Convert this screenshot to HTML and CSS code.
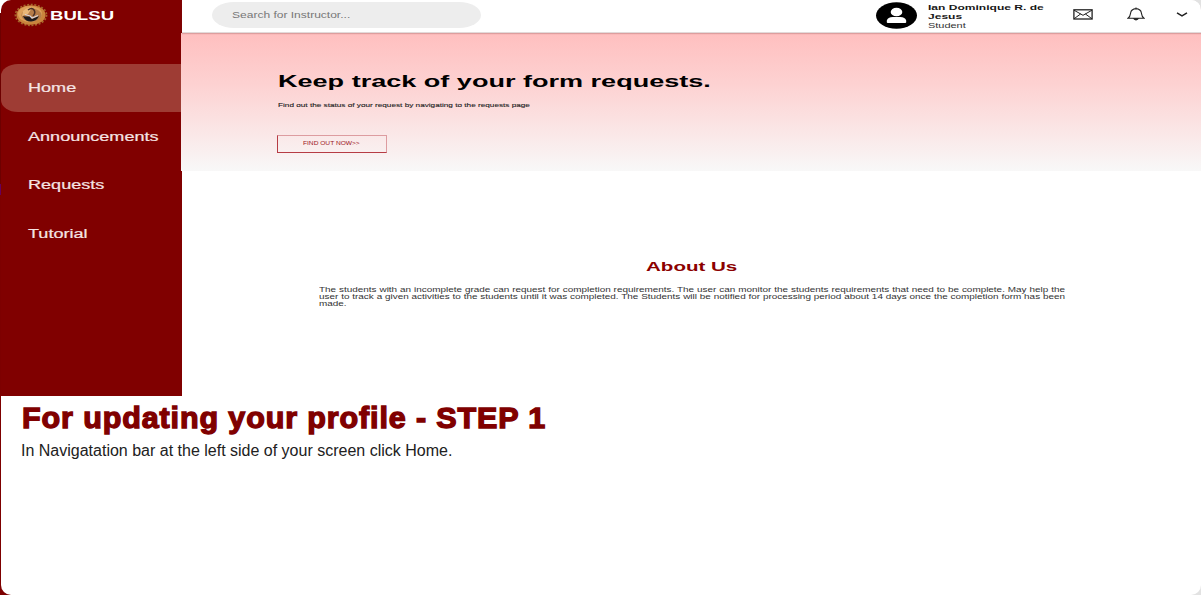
FILE: index.html
```html
<!DOCTYPE html>
<html lang="en">
<head>
<meta charset="utf-8">
<title>For updating your profile</title>
<link rel="stylesheet" href="styles.css">
</head>
<body>
<main class="card">
  <section class="preview">
    <aside class="sidebar">
      <div class="brand">
        <svg class="seal" width="34" height="24" viewBox="0 0 34 24">
          <ellipse cx="17" cy="12" rx="15.6" ry="10.4" fill="none" stroke="#a5652a" stroke-width="1.6" stroke-dasharray="2 1.6"/>
          <ellipse cx="17" cy="12" rx="14.6" ry="9.8" fill="#c9843c"/>
          <ellipse cx="16" cy="11" rx="12" ry="8" fill="#dca05a"/>
          <ellipse cx="17.5" cy="12.2" rx="10" ry="6.6" fill="#b57c48"/>
          <path d="M9 8q4-4 9-3l-4 6-6 2z" fill="#e9b777"/>
          <path d="M9 13q4 1 7 0l2 3 7-3q-2 5-8 5.500q-6 0-8-5.500z" fill="#1d1a1c"/>
          <path d="M14 7q4-3 6 0t-1 6" fill="none" stroke="#4a3028" stroke-width="1.500"/>
          <path d="M11 11.500l5 1.500 2 2 6-2.500" fill="none" stroke="#d9d5dc" stroke-width="1.200"/>
        </svg>
        <span class="wide brand-name">BULSU</span>
      </div>
      <nav class="menu">
        <a class="item active"><span class="wide">Home</span></a>
        <a class="item"><span class="wide">Announcements</span></a>
        <a class="item"><span class="wide">Requests</span></a>
        <a class="item"><span class="wide">Tutorial</span></a>
      </nav>
    </aside>
    <div class="content">
      <header class="topbar">
        <div class="search"><span class="wide">Search for Instructor...</span></div>
        <div class="account">
          <svg class="avatar" width="41" height="27" viewBox="0 0 41 27">
            <ellipse cx="20.500" cy="13.500" rx="20.500" ry="13.200" fill="#000"/>
            <ellipse cx="20.500" cy="10" rx="5.800" ry="4.300" fill="#fff"/>
            <path d="M10.800 20.300v-1.700q1-3.400 6-3.600h7.400q5 .1 6 3.600v1.700q0 .7-1 .7h-17.400q-1 0-1-.7z" fill="#fff"/>
          </svg>
          <div class="who">
            <span class="wide name first">Ian Dominique R. de</span>
            <span class="wide name">Jesus</span>
            <span class="wide role">Student</span>
          </div>
        </div>
        <svg class="mail" width="20" height="11" viewBox="0 0 20 11" fill="none" stroke="#222" stroke-width="1">
          <rect x=".9" y=".8" width="18.200" height="9.200" stroke-width="1.300"/>
          <path d="M1 1.200l9 5.100 9-5.100M1 9.800l6.700-4.900M19 9.800l-6.700-4.900"/>
        </svg>
        <svg class="bell" width="18" height="14" viewBox="0 0 18 14" fill="none" stroke="#222" stroke-width="1.100">
          <path d="M1 11.200c2.200-1.500 2.300-3 2.600-5.200C4 3.300 6 1.800 9 1.600c3 .2 5 1.700 5.400 4.400.3 2.200.4 3.700 2.600 5.200zM9 1.600V.4"/>
          <path d="M6.800 11.700q2.200 2.500 4.400 0z" fill="#222"/>
        </svg>
        <svg class="chevron" width="12" height="5" viewBox="0 0 12 5"><path d="M1 .8l5 3L11 .8" fill="none" stroke="#222" stroke-width="1.500"/></svg>
      </header>
      <div class="hero">
        <h2 class="wide hero-title">Keep track of your form requests.</h2>
        <p class="wide hero-text">Find out the status of your request by navigating to the requests page</p>
        <div class="cta"><span class="wide">FIND OUT NOW&gt;&gt;</span></div>
      </div>
      <div class="about">
        <h3 class="wide about-title">About Us</h3>
        <div class="about-text">
          <div class="line">The students with an incomplete grade can request for completion requirements. The user can monitor the students requirements that need to be complete. May help the</div>
          <div class="line">user to track a given activities to the students until it was completed. The Students will be notified for processing period about 14 days once the completion form has been</div>
          <div class="line last">made.</div>
        </div>
      </div>
    </div>
  </section>
  <section class="step">
    <h1 class="wide step-title">For updating your profile - STEP 1</h1>
    <p class="step-text">In Navigatation bar at the left side of your screen click Home.</p>
  </section>
</main>
</body>
</html>
```
FILE: styles.css
```css
* { box-sizing: border-box; }
html, body { height: 100%; }
body {
  margin: 0;
  padding-left: 1px;
  overflow: hidden;
  font-family: "Liberation Sans", Arial, sans-serif;
  background:
    linear-gradient(#fff 13px, #6d0000 13px, #6d0000 184px, #65005d 184px, #65005d 195px, #7d0000 195px) 0 0 / 12px 100% no-repeat,
    #e2e2e2;
}
h1, h2, h3, p { margin: 0; }

.card {
  height: 595px;
  overflow: hidden;
  background: #fff;
  border-radius: 10px;
}
.preview { display: flex; height: 396px; }

/* Type in the preview is drawn wider than its natural shape. */
.wide {
  display: block;
  width: max-content;
  white-space: nowrap;
  transform-origin: 0 50%;
  transform: scaleX(var(--sx, 1.54));
}

.sidebar { width: 180.700px; background: #800000; color: #f5e4e4; }
.brand { display: flex; align-items: center; height: 30px; padding-left: 13px; }
.brand-name { --sx: 1.55; margin: 1px 0 0 2px; font-size: 12px; font-weight: bold; color: #fff; }
.menu { padding-top: 34px; }
.item {
  display: flex;
  align-items: center;
  height: 48.600px;
  padding: 1px 0 0 27px;
  font-size: 12px;
  -webkit-text-stroke: .2px #f5e4e4;
}
.item .wide { --sx: 1.505; }
.item.active { height: 48px; padding-top: 0; border-radius: 17px 0 0 17px / 12px 0 0 12px; background: #9e3c34; }

.content { flex: 1; min-width: 0; }
.topbar {
  position: relative;
  display: flex;
  align-items: flex-start;
  height: 33px;
  background: #fff;
  border-bottom: 1px solid #e2dada;
  box-shadow: 0 1px 1px rgba(120, 60, 60, .25);
}
.search {
  width: 269.500px;
  height: 26px;
  margin: 2px 0 0 30px;
  padding: 7px 0 0 20.500px;
  border-radius: 22px / 13px;
  background: #ededed;
  color: #777;
  font-size: 9.500px;
  line-height: 11px;
}
.search .wide { --sx: 1.265; }
.account { display: flex; width: 197px; margin-left: 394.500px; }
.avatar { margin-top: 2px; flex: none; }
.who { padding: 3px 0 0 11px; font-size: 8px; line-height: 9px; color: #181818; }
.name { --sx: 1.505; font-weight: bold; }
.role { --sx: 1.46; font-size: 7.500px; color: #333; }
.mail { margin-top: 9px; }
.bell { margin: 7px 0 0 34px; }
.chevron { margin: 12px 0 0 31px; }

.hero {
  height: 137.500px;
  margin-left: -1px;
  padding: 37px 0 0 97px;
  background: linear-gradient(#ffbfbf, #fdd2d2 38%, #f8f8f8);
}
.hero-title { --sx: 1.565; font-size: 17.300px; line-height: 22px; color: #000; }
.hero-text { --sx: 1.49; margin-top: 9px; font-size: 5.500px; line-height: 8px; color: #222; -webkit-text-stroke: .1px #222; }
.cta {
  width: 110px;
  height: 18px;
  margin: 26px 0 0 -1px;
  padding: 4px 0 0 25px;
  border: 1px solid #dd9ca0;
  border-left-color: #b63c44;
  border-bottom-color: #b63c44;
  font-size: 5px;
  line-height: 7px;
  color: #9c1424;
}
.cta .wide { --sx: 1.32; }

.about { padding: 88px 0 0 137px; }
.about-title { --sx: 1.58; margin-left: 327.500px; font-size: 13px; line-height: 16px; color: #8b0000; }
.about-text {
  width: 481px;
  margin-top: 11px;
  font-size: 6.400px;
  line-height: 7.400px;
  color: #333;
  transform: scaleX(1.551);
  transform-origin: 0 0;
}
.line { white-space: nowrap; text-align-last: justify; }
.line.last { text-align-last: left; }

.step { padding: 5px 20px 0; }
.step-title {
  --sx: 1.06;
  margin-left: .5px;
  font-size: 28.800px;
  font-weight: bold;
  line-height: 34px;
  letter-spacing: .82px;
  color: #800000;
  -webkit-text-stroke: 1.300px #800000;
}
.step-text { margin-top: 6px; font-size: 16px; line-height: 19px; color: #212121; }
```
